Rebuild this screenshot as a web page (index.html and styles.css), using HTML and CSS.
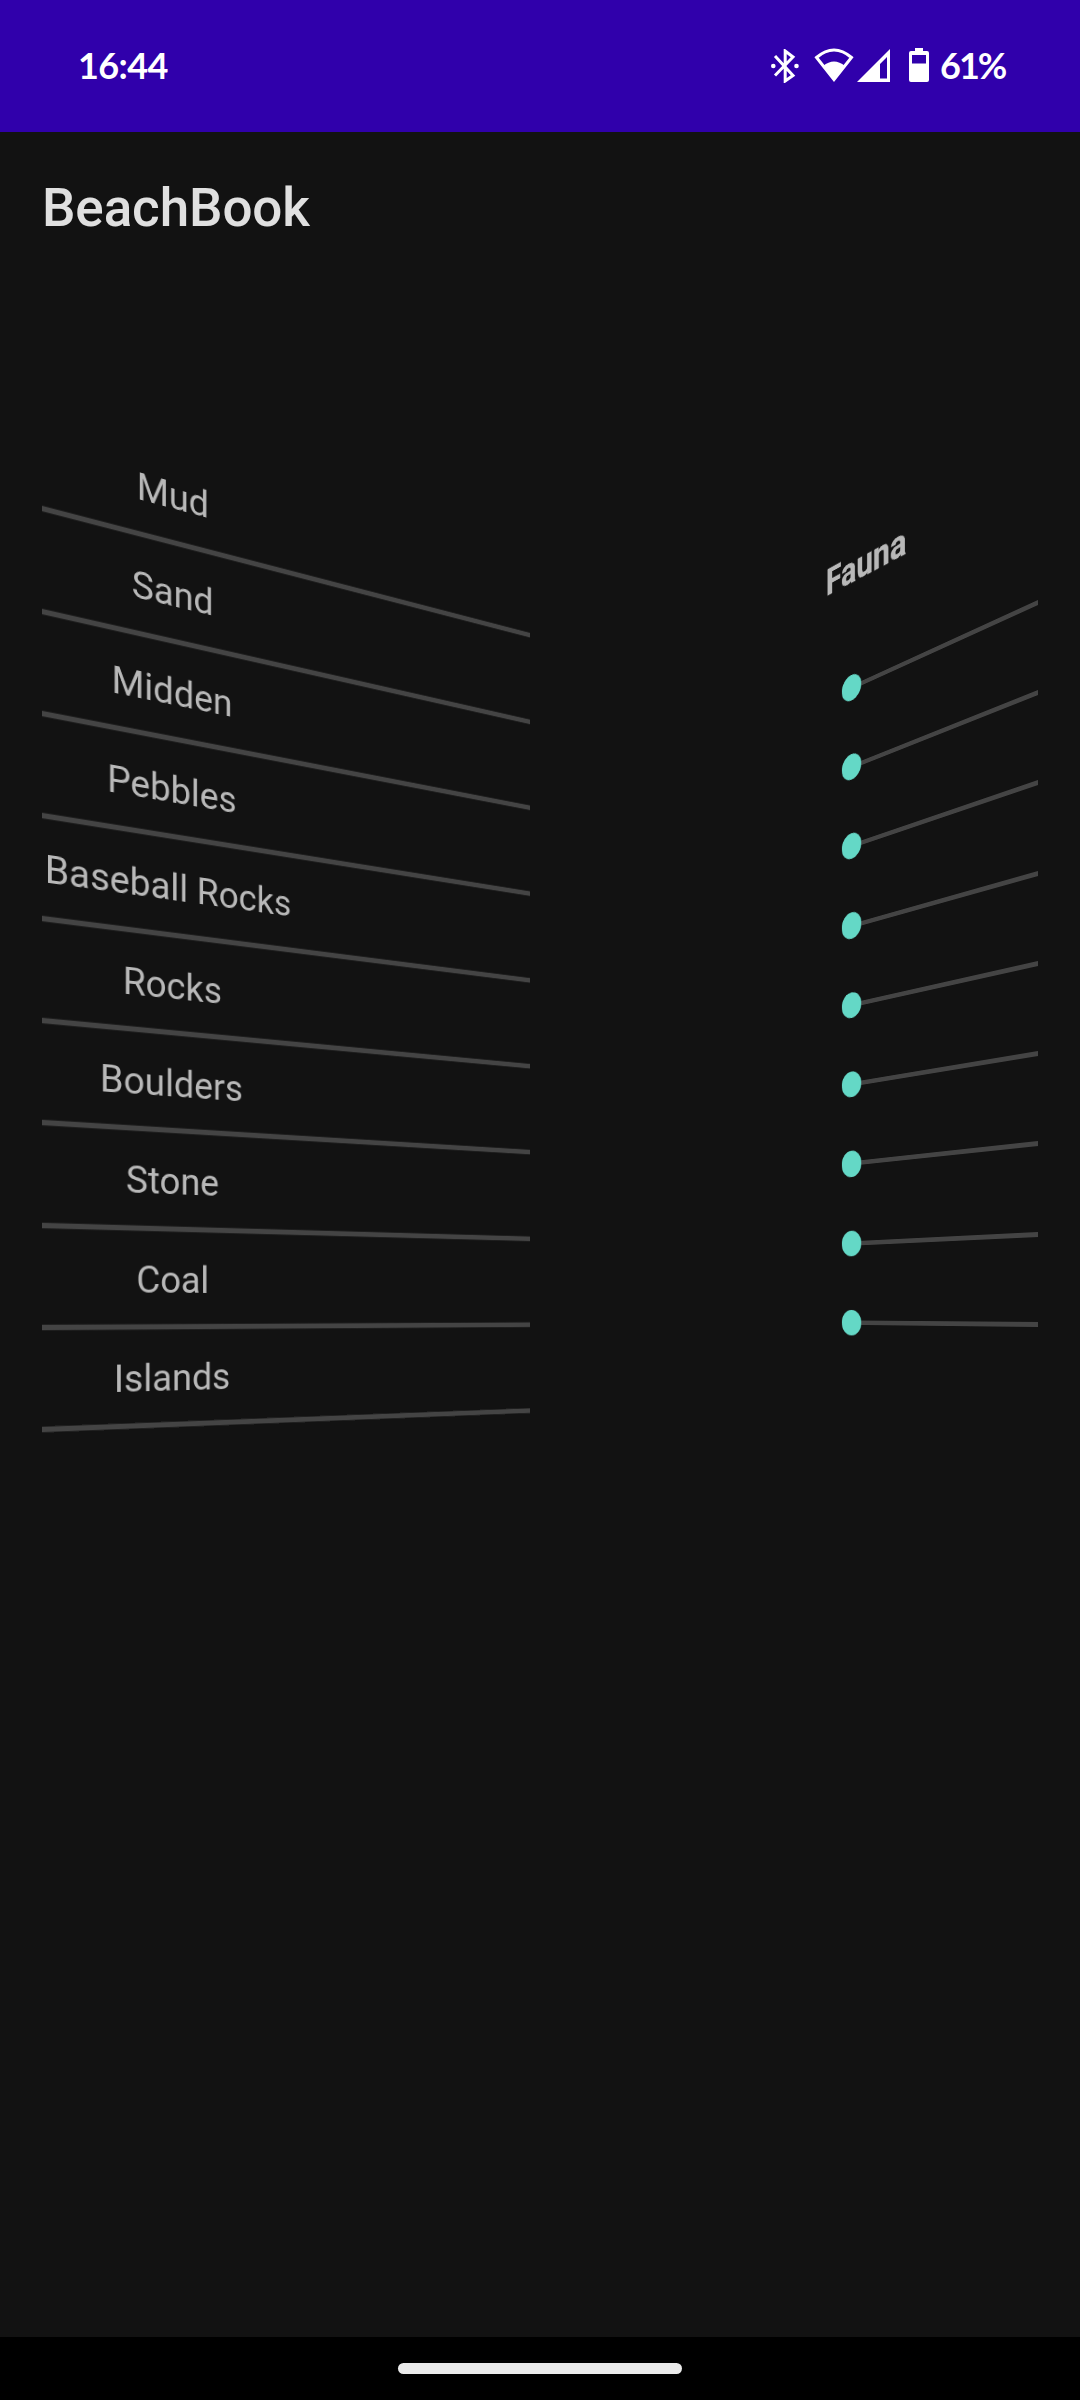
FILE: index.html
```html
<!DOCTYPE html>
<html lang="en">
<head>
<meta charset="utf-8">
<title>BeachBook</title>
<link rel="stylesheet" href="styles.css">
</head>
<body>
<div class="screen">
  <header class="status">
    <span class="clock">16:44</span>
    <div class="tray">
      <svg class="bluetooth" viewBox="0 0 28 34" width="28" height="34">
        <path d="M4 7 L22 26.500 L14.200 32 V2 L22 8 L4 26.500" fill="none" stroke="#fff" stroke-width="3"/>
        <circle cx="2.300" cy="17" r="2.300" fill="#fff"/><circle cx="25.500" cy="17" r="2.300" fill="#fff"/>
      </svg>
      <svg class="wifi" viewBox="0 0 40 34" width="40" height="34">
        <path d="M2.500 9.500 Q20 -5.500 37.500 9.500 L20 31.500 Z" fill="none" stroke="#fff" stroke-width="3"/>
        <path d="M9 18 Q20 9 31 18 L20 33 Z" fill="#fff"/>
      </svg>
      <svg class="signal" viewBox="0 0 33 33" width="33" height="33">
        <path d="M33 0 V33 H0 Z M30 8 L23 15 V29.500 H30 Z" fill="#fff" fill-rule="evenodd"/>
      </svg>
      <svg class="battery" viewBox="0 0 20 34" width="20" height="34">
        <path d="M6 0 H14 V3 H18 Q20 3 20 5 V32 Q20 34 18 34 H2 Q0 34 0 32 V5 Q0 3 2 3 H6 Z M3 7 V15.500 H17 V7 Z" fill="#fff" fill-rule="evenodd"/>
      </svg>
      <span class="percent">61%</span>
    </div>
  </header>
  <h1 class="appbar">BeachBook</h1>
  <main class="pager">
    <ul class="page habitats">
      <li><span>Mud</span></li>
      <li><span>Sand</span></li>
      <li><span>Midden</span></li>
      <li><span>Pebbles</span></li>
      <li><span>Baseball Rocks</span></li>
      <li><span>Rocks</span></li>
      <li><span>Boulders</span></li>
      <li><span>Stone</span></li>
      <li><span>Coal</span></li>
      <li><span>Islands</span></li>
    </ul>
    <section class="page fauna">
      <h2>Fauna</h2>
      <div class="slider"><i></i></div>
      <div class="slider"><i></i></div>
      <div class="slider"><i></i></div>
      <div class="slider"><i></i></div>
      <div class="slider"><i></i></div>
      <div class="slider"><i></i></div>
      <div class="slider"><i></i></div>
      <div class="slider"><i></i></div>
      <div class="slider"><i></i></div>
    </section>
  </main>
  <footer class="nav"><div class="pill"></div></footer>
</div>
</body>
</html>
```

FILE: styles.css
```css
* { box-sizing: border-box; margin: 0; padding: 0; }
body { background: #121212; font-family: Roboto, sans-serif; }
.screen { width: 1080px; height: 2400px; display: flex; flex-direction: column; overflow: hidden; }

.status { height: 132px; background: #3000ab; color: #fff; display: flex; justify-content: space-between; align-items: flex-start; padding: 0 74px 0 78px; font-family: Lato, sans-serif; font-weight: 700; font-size: 36px; line-height: 44px; }
.clock { padding-top: 43px; letter-spacing: -0.6px; }
.tray { display: flex; align-items: flex-start; padding-top: 48px; }
.bluetooth { margin: 1px 15px 0 0; }
.wifi { margin-right: 3px; }
.signal { margin: 1px 19px 0 0; }
.battery { margin-right: 11px; }
.percent { margin-top: -5px; width: 66px; letter-spacing: -2px; }

.appbar { height: 153px; padding: 2px 42px 0; line-height: 149px; font-size: 53px; letter-spacing: -0.1px; font-weight: 500; color: #e0e0e0; }

.pager { flex: 1; display: flex; justify-content: space-between; align-items: flex-start; padding: 0 42px; }

/* Pages turn about their outer edges; the vanishing line is at y = 1309.5 */
.habitats { list-style: none; width: 580px; margin-top: 123.800px; flex: none; transform-origin: 0 900.700px; transform: matrix3d(1,0,0,0.000324, 0,1,0,0, 0,0,1,0, 0,0,0,1); }
.habitats li { height: 102.330px; display: flex; flex-direction: column; justify-content: space-between; }
.habitats li::after { content: ""; height: 5px; background: #444; transform: scaleY(1.1); }
.habitats span { display: block; width: 274px; text-align: center; white-space: nowrap; font-size: 39.600px; line-height: 47px; padding-top: 27px; color: #b8b8b8; }

.fauna { width: 300px; flex: none; margin-top: 157.200px; transform-origin: 100% 867.300px; transform: matrix3d(0.871,0,0,-0.000563, 0,1,0,0, 0,0,1,0, 0,0,0,1); }
.fauna h2 { height: 115px; padding-right: 165px; padding-top: 1px; text-align: right; font-size: 43px; line-height: 50px; font-weight: 700; color: #b8b8b8; -webkit-text-stroke: 0.4px #b8b8b8; }
.slider { height: 90.300px; margin-left: 42.200px; display: flex; align-items: center; }
.slider i { width: 29.200px; height: 29.200px; border-radius: 50%; background: #64d8c6; }
.slider::after { content: ""; flex: 1; height: 5px; background: #444; transform: scaleY(0.96); }

.nav { height: 63px; background: #000; display: flex; justify-content: center; padding-top: 26px; }
.pill { width: 284px; height: 11px; border-radius: 6px; background: #ebebeb; }
```
